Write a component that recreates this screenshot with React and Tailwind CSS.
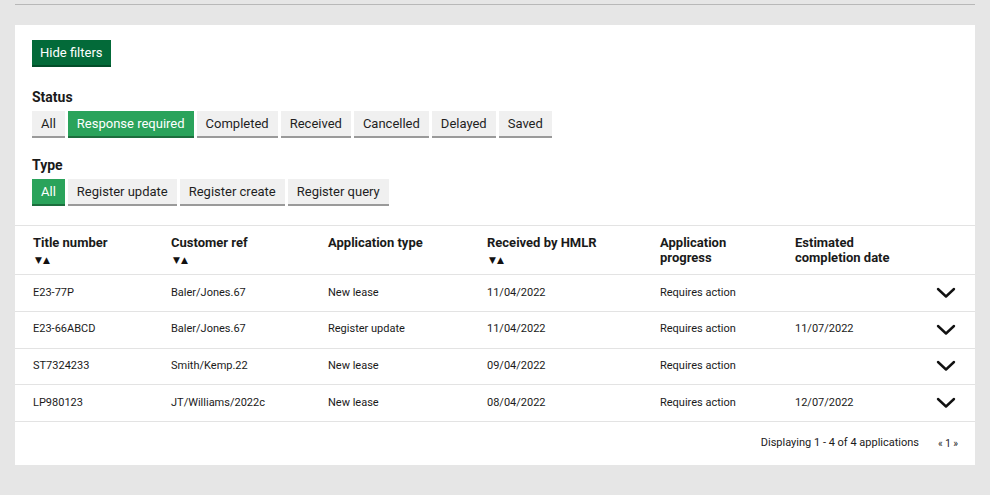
import { useState } from "react";

const statuses = ["All", "Response required", "Completed", "Received", "Cancelled", "Delayed", "Saved"];
const types = ["All", "Register update", "Register create", "Register query"];

const rows = [
  { title: "E23-77P", ref: "Baler/Jones.67", type: "New lease", received: "11/04/2022", progress: "Requires action", est: "" },
  { title: "E23-66ABCD", ref: "Baler/Jones.67", type: "Register update", received: "11/04/2022", progress: "Requires action", est: "11/07/2022" },
  { title: "ST7324233", ref: "Smith/Kemp.22", type: "New lease", received: "09/04/2022", progress: "Requires action", est: "" },
  { title: "LP980123", ref: "JT/Williams/2022c", type: "New lease", received: "08/04/2022", progress: "Requires action", est: "12/07/2022" },
];

function FilterButton({ label, active, onClick }) {
  return (
    <button
      onClick={onClick}
      className={
        active
          ? "h-[27px] px-[9px] text-[13px] leading-none text-white bg-[#2aa35b] border-b-2 border-[#1c6e3d]"
          : "h-[27px] px-[9px] text-[13px] leading-none text-[#1f1f1f] bg-[#f0f0f0] border-b-2 border-[#9a9a9a]"
      }
    >
      {label}
    </button>
  );
}

function SortArrows() {
  return (
    <div className="text-[9px] leading-none mt-[6px] ml-[2px] tracking-[1px] font-['DejaVu_Sans',sans-serif] text-[#111]">
      ▼▲
    </div>
  );
}

function Chevron() {
  return (
    <svg width="20" height="12" viewBox="0 0 20 12" fill="none">
      <path d="M2 2 L10 9.5 L18 2" stroke="#111" strokeWidth="2.4" strokeLinecap="round" strokeLinejoin="round" />
    </svg>
  );
}

export default function App() {
  const [status, setStatus] = useState("Response required");
  const [type, setType] = useState("All");

  const cols = "grid grid-cols-[138px_157px_159px_173px_135px_1fr_40px] pl-[18px] pr-[17px]";

  return (
    <div className="w-[990px] h-[495px] bg-[#e6e6e6] font-['Roboto',sans-serif] text-[#1a1a1a] overflow-hidden">
      <div className="pt-[4px] px-[15px]">
        <div className="h-px bg-[#b8b8b8]"></div>
      </div>
      <div className="mx-[15px] mt-[20px] bg-white h-[440px] flex flex-col">
        <div className="pl-[17px] pt-[15px]">
          <button className="h-[27px] px-[8px] text-[13px] leading-none text-white bg-[#036a39] border-b-2 border-[#024d29]">
            Hide filters
          </button>

          <div className="mt-[23px] text-[14px] font-bold leading-none">Status</div>
          <div className="flex gap-[3px] mt-[7px]">
            {statuses.map((s) => (
              <FilterButton key={s} label={s} active={status === s} onClick={() => setStatus(s)} />
            ))}
          </div>

          <div className="mt-[20px] text-[14px] font-bold leading-none">Type</div>
          <div className="flex gap-[3px] mt-[7px]">
            {types.map((t) => (
              <FilterButton key={t} label={t} active={type === t} onClick={() => setType(t)} />
            ))}
          </div>
        </div>

        <div className="mt-[19px] border-t border-[#e3e3e3]">
          <div className={cols + " h-[49px] pt-[9px] text-[13px] font-bold leading-[15px] border-b border-[#e3e3e3]"}>
            <div>
              Title number
              <SortArrows />
            </div>
            <div>
              Customer ref
              <SortArrows />
            </div>
            <div>Application type</div>
            <div>
              Received by HMLR
              <SortArrows />
            </div>
            <div>
              Application
              <br />
              progress
            </div>
            <div>
              Estimated
              <br />
              completion date
            </div>
            <div></div>
          </div>

          {rows.map((r) => (
            <div key={r.title} className={cols + " h-[36.75px] items-center text-[11px] border-b border-[#e3e3e3]"}>
              <div>{r.title}</div>
              <div>{r.ref}</div>
              <div>{r.type}</div>
              <div>{r.received}</div>
              <div>{r.progress}</div>
              <div>{r.est}</div>
              <div className="flex justify-end pr-[2px]">
                <Chevron />
              </div>
            </div>
          ))}

          <div className="flex justify-end items-center h-[43px] pr-[17px] text-[11px]">
            <span>Displaying 1 - 4 of 4 applications</span>
            <span className="ml-[19px] text-[10px]">« 1 »</span>
          </div>
        </div>
      </div>
    </div>
  );
}
